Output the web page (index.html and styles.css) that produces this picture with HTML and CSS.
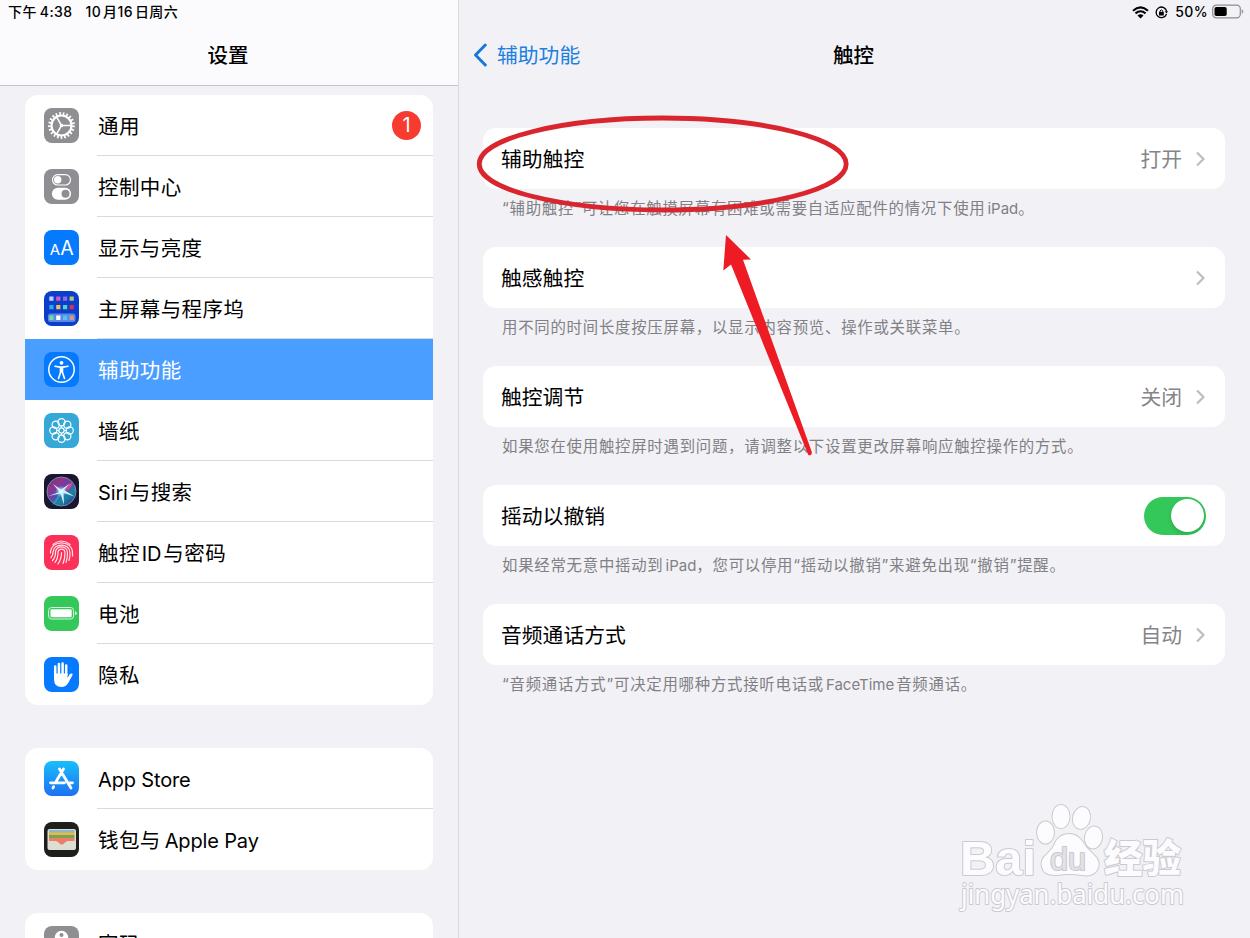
FILE: index.html
```html
<!DOCTYPE html>
<html lang="zh-CN">
<head>
    <meta charset="UTF-8">
    <meta name="viewport" content="width=device-width, initial-scale=1.0">
    <title>设置</title>
    <link rel="stylesheet" href="styles.css">
</head>
<body>
    <div class="screen">
        <aside class="sidebar">
            <header class="side-header">
                <div class="status"><span>下午<b class="time">4:38</b></span><span class="date">10<i></i>月16<i></i>日周六</span></div>
                <h1>设置</h1>
            </header>
            <nav class="menu">
                <div class="group">
                    <div class="item">
                        <svg class="icon gray" viewBox="0 0 35 35">
                            <circle cx="17.5" cy="17.5" r="12" fill="none" stroke="#fff" stroke-width="2.8" stroke-dasharray="1.7 1.89"/>
                            <circle cx="17.5" cy="17.5" r="10" fill="none" stroke="#fff" stroke-width="2.2"/>
                            <path d="M17.5 17.5H27M17.5 17.5L12.7 9.2M17.5 17.5L12.7 25.8" stroke="#fff" stroke-width="1.5"/>
                            <circle cx="17.5" cy="17.5" r="1.8" fill="#fff"/>
                        </svg>
                        <span class="label">通用</span><span class="badge">1</span>
                    </div>
                    <div class="item">
                        <svg class="icon gray" viewBox="0 0 35 35">
                            <rect x="8.5" y="5.6" width="18" height="10.4" rx="5.2" fill="none" stroke="#fff" stroke-width="1.2"/>
                            <circle cx="13.7" cy="10.8" r="3.7" fill="#fff"/>
                            <rect x="7.9" y="18.8" width="19.2" height="12" rx="6" fill="#fff"/>
                            <circle cx="21.5" cy="24.8" r="4" fill="#8e8e93"/>
                        </svg>
                        <span class="label">控制中心</span>
                    </div>
                    <div class="item">
                        <svg class="icon blue" viewBox="0 0 35 35">
                            <text class="aa" x="5.8" y="25" font-size="15">A</text>
                            <text class="aa" x="16.2" y="25" font-size="19.5">A</text>
                        </svg>
                        <span class="label">显示与亮度</span>
                    </div>
                    <div class="item">
                        <svg class="icon home" viewBox="0 0 35 35">
                            <rect x="4" y="22.5" width="27.5" height="8.5" rx="2.5" fill="#5b8ae4"/>
                            <path d="M5.3 5.6h4.2v4.2H5.3z" fill="#c9ccff"/><path d="M12.2 5.6h4.2v4.2h-4.2z" fill="#cf5ac0"/><path d="M19 5.6h4.2v4.2H19z" fill="#8f68ec"/><path d="M25.6 5.6h4.2v4.2h-4.2z" fill="#a9c878"/>
                            <path d="M5.3 14h4.2v4.2H5.3z" fill="#28a9f2"/><path d="M12.2 14h4.2v4.2h-4.2z" fill="#f4ba5c"/><path d="M19 14h4.2v4.2H19z" fill="#50d4c4"/><path d="M25.6 14h4.2v4.2h-4.2z" fill="#d6334c"/>
                            <path d="M5.3 24.6h4.2v4.4H5.3z" fill="#73dba5"/><path d="M12.2 24.6h4.2v4.4h-4.2z" fill="#fff"/><path d="M19 24.6h4.2v4.4H19z" fill="#58bef8"/><path d="M25.6 24.6h4.2v4.4h-4.2z" fill="#d29a86"/>
                        </svg>
                        <span class="label">主屏幕与程序坞</span>
                    </div>
                    <div class="item active">
                        <svg class="icon blue" viewBox="0 0 35 35">
                            <circle cx="17.5" cy="17.5" r="12.7" fill="none" stroke="#fff" stroke-width="1.5"/>
                            <circle cx="17.5" cy="10.8" r="1.9" fill="#fff"/>
                            <path d="M11 14.2l5 .9h3l5-.9M17.5 15v5M16.5 15.5v5l-2 6M18.5 15.5v5l2 6" fill="none" stroke="#fff" stroke-width="1.6" stroke-linecap="round" stroke-linejoin="round"/>
                        </svg>
                        <span class="label">辅助功能</span>
                    </div>
                    <div class="item">
                        <svg class="icon wall" viewBox="0 0 35 35">
                            <g fill="none" stroke="#fff" stroke-width="1.2">
                                <circle cx="17.5" cy="17.5" r="2.6"/>
                                <circle cx="17.5" cy="9.3" r="3.6"/><circle cx="23.3" cy="11.7" r="3.6"/><circle cx="25.7" cy="17.5" r="3.6"/><circle cx="23.3" cy="23.3" r="3.6"/>
                                <circle cx="17.5" cy="25.7" r="3.6"/><circle cx="11.7" cy="23.3" r="3.6"/><circle cx="9.3" cy="17.5" r="3.6"/><circle cx="11.7" cy="11.7" r="3.6"/>
                                <path d="M17.5 12.5v2.5M17.5 20v2.5M12.5 17.5H15M20 17.5h2.5"/>
                            </g>
                        </svg>
                        <span class="label">墙纸</span>
                    </div>
                    <div class="item">
                        <svg class="icon siri" viewBox="0 0 35 35">
                            <defs>
                                <linearGradient id="orb" x1="0" y1="0" x2=".8" y2="1"><stop offset="0" stop-color="#254b94"/><stop offset=".3" stop-color="#943288"/><stop offset=".55" stop-color="#5a4ab0"/><stop offset=".75" stop-color="#1787a0"/><stop offset="1" stop-color="#283b9c"/></linearGradient>
                                <radialGradient id="glow"><stop offset="0" stop-color="#fff"/><stop offset=".4" stop-color="#bff5ff" stop-opacity=".6"/><stop offset="1" stop-color="#8de9ff" stop-opacity="0"/></radialGradient>
                            </defs>
                            <circle cx="17.5" cy="17.5" r="14.5" fill="url(#orb)" stroke="#9a91ae" stroke-width=".8"/>
                            <path d="M4 22q8-1 13-5L8 31q4 0 10-13z" fill="#18c7bc" opacity=".55"/>
                            <path d="M17 17L28 8q2 6-9 10z" fill="#f3428a" opacity=".8"/>
                            <path d="M17 15.5l-8-5.500 6.500 8-11 4 12-2.500L20 31l-.5-12 11 3.500L20 16l6-6.500z" fill="#c9f6fc"/>
                            <circle cx="17" cy="17.5" r="6" fill="url(#glow)"/>
                        </svg>
                        <span class="label"><span class="latin">Siri</span><i></i>与搜索</span>
                    </div>
                    <div class="item">
                        <svg class="icon touch" viewBox="0 0 35 35">
                            <g fill="none" stroke="#ffe5ea" stroke-width="1.2" stroke-linecap="round">
                                <path d="M9 9.5Q17.5 2.500 26 9.5"/>
                                <path d="M6.5 18C6.5 4.5 28.5 4.5 28.5 18v3"/>
                                <path d="M7 22.5q2-2 2-5C9 7.5 26 7.5 26 18q0 5-1 7.5"/>
                                <path d="M8.5 25.5q3-3 3-8c0-7.5 12-7.5 12 .5q0 6-1.5 9.5"/>
                                <path d="M11 27.5q3-4 3-10c0-4.5 7-4.5 7 .5q0 6-2 10.5"/>
                                <path d="M14 29q3.5-5 3.5-11.5"/>
                            </g>
                        </svg>
                        <span class="label">触控<i></i><span class="latin">ID</span><i></i>与密码</span>
                    </div>
                    <div class="item">
                        <svg class="icon green" viewBox="0 0 35 35">
                            <rect x="4.6" y="11.5" width="25" height="11.5" rx="3" fill="none" stroke="#d9f5df" stroke-width="1"/>
                            <rect x="6.5" y="13.3" width="21.2" height="7.9" rx="1.3" fill="#fff"/>
                            <path d="M31 15.2q1.800.5 1.800 2t-1.800 2z" fill="#d9f5df"/>
                        </svg>
                        <span class="label">电池</span>
                    </div>
                    <div class="item">
                        <svg class="icon blue" viewBox="0 0 35 35">
                            <path d="M11.200 19V9.5M14.900 17V7M18.600 17V6.500M22.200 18V8.500" stroke="#fff" stroke-width="2.5" stroke-linecap="round"/>
                            <path d="M10 16.5h13.5v4.5l2.2-3.7q1.300-1.500 2.700-.5.500.5 0 1.500l-4 7.500Q22 30 17.500 30 10 30 10 22z" fill="#fff"/>
                        </svg>
                        <span class="label">隐私</span>
                    </div>
                </div>
                <div class="group">
                    <div class="item">
                        <svg class="icon store" viewBox="0 0 35 35">
                            <g stroke="#fff" stroke-width="2.8" stroke-linecap="round">
                                <path d="M19.5 8L11.5 21.5M15.5 8l11.5 19M6.5 21.8h14M25.5 21.8h3M9.600 25.800l-.7 1.200"/>
                            </g>
                        </svg>
                        <span class="label"><span class="latin">App Store</span></span>
                    </div>
                    <div class="item">
                        <svg class="icon wallet" viewBox="0 0 35 35">
                            <rect x="3.5" y="7" width="28.5" height="21" rx="2" fill="#deddd3"/>
                            <path d="M5 8h25.5v3H5z" fill="#8bb7c9"/>
                            <path d="M5 10.5h25.5v3H5z" fill="#e5bb45"/>
                            <path d="M5 13h25.5v3.5H5z" fill="#77a44d"/>
                            <path d="M5 16h25.5v3H24q-2 0-3.500 2-2.700 3.200-5.500 0-1.500-2-3.500-2H5z" fill="#ef7b69"/>
                        </svg>
                        <span class="label">钱包与<i></i><i></i><span class="latin">Apple Pay</span></span>
                    </div>
                </div>
                <div class="group">
                    <div class="item">
                        <svg class="icon gray" viewBox="0 0 35 35">
                            <circle cx="17.5" cy="11.5" r="6.7" fill="#fff"/>
                            <circle cx="17.5" cy="9" r="2" fill="#8e8e93"/>
                            <path d="M15 16h5v12l-2.500 3-2.500-3z" fill="#fff"/>
                        </svg>
                        <span class="label">密码</span>
                    </div>
                </div>
            </nav>
        </aside>

        <main class="detail">
            <div class="status right">
                <svg width="17" height="13" viewBox="0 0 17 13">
                    <path d="M1 4.700Q8.500-1.800 16 4.700M3.500 7.400q5-4.300 10 0" fill="none" stroke="#000" stroke-width="2.1"/>
                    <path d="M5.500 9.400q3-2.400 6 0l-3 3.100z"/>
                </svg>
                <svg class="lock" width="13" height="13" viewBox="0 0 13 13">
                    <path d="M11.500 8A5.300 5.300 0 1 1 11.700 5.500" fill="none" stroke="#000" stroke-width="1.3"/>
                    <path d="M9.800 5.200h3.200l-1.500 2.300zM4 6h4.800v3.500H4z"/>
                    <path d="M5 6V4.900q1.400-2 2.800 0V6" fill="none" stroke="#000"/>
                </svg>
                <span>50%</span>
                <svg class="battery" width="32" height="16" viewBox="0 0 32 16">
                    <rect x=".7" y="1.2" width="27.6" height="12.6" rx="3.6" fill="none" stroke="#8d8d91" stroke-width="1.2"/>
                    <rect x="2.5" y="3" width="12.2" height="9" rx="1.8"/>
                    <path d="M29.700 5.300q1.700.5 1.700 2.200t-1.700 2.200z" fill="#9d9da1"/>
                </svg>
            </div>
            <header class="detail-header">
                <a class="back"><svg width="15" height="24" viewBox="0 0 15 24"><path d="M12.300 2L2.500 12l9.800 10" fill="none" stroke="#1477dc" stroke-width="2.900" stroke-linecap="round" stroke-linejoin="round"/></svg><span>辅助功能</span></a>
                <h2>触控</h2>
            </header>
            <section class="options">
                <div class="card"><span>辅助触控</span><span class="value">打开</span><svg class="chevron" viewBox="0 0 9 16"><path d="M1 1.500L7.500 8 1 14.500"/></svg></div>
                <p>“辅助触控”可让您在触摸屏幕有困难或需要自适应配件的情况下使用<i></i><span class="latin">iPad</span>。</p>
                <div class="card"><span>触感触控</span><svg class="chevron" viewBox="0 0 9 16"><path d="M1 1.500L7.500 8 1 14.500"/></svg></div>
                <p>用不同的时间长度按压屏幕，以显示内容预览、操作或关联菜单。</p>
                <div class="card"><span>触控调节</span><span class="value">关闭</span><svg class="chevron" viewBox="0 0 9 16"><path d="M1 1.500L7.500 8 1 14.500"/></svg></div>
                <p>如果您在使用触控屏时遇到问题，请调整以下设置更改屏幕响应触控操作的方式。</p>
                <div class="card"><span>摇动以撤销</span><span class="switch"></span></div>
                <p>如果经常无意中摇动到<i></i><span class="latin">iPad</span>，您可以停用“摇动以撤销”来避免出现“撤销”提醒。</p>
                <div class="card"><span>音频通话方式</span><span class="value">自动</span><svg class="chevron" viewBox="0 0 9 16"><path d="M1 1.500L7.500 8 1 14.500"/></svg></div>
                <p>“音频通话方式”可决定用哪种方式接听电话或<i></i><span class="latin">FaceTime</span><i></i>音频通话。</p>
            </section>
        </main>

        <svg class="marks" width="1250" height="938" viewBox="0 0 1250 938">
            <ellipse cx="662.7" cy="164" rx="183.5" ry="46" fill="none" stroke="#d9262e" stroke-width="4.800"/>
            <path d="M726 235l25 24.500-8 .2L811.800 452q.2 4-3.500 3L731 264.500l-7.700 6z" fill="#ed1c24"/>
        </svg>
        <svg class="watermark" width="250" height="130" viewBox="0 0 250 130">
            <g class="wm">
                <text class="wm-logo" x="8" y="84" textLength="76" lengthAdjust="spacingAndGlyphs">Bai</text>
                <ellipse cx="93.500" cy="41.500" rx="8.500" ry="11"/>
                <ellipse cx="109" cy="25.500" rx="8.500" ry="11.500"/>
                <ellipse cx="129.500" cy="27" rx="8.500" ry="11" transform="rotate(12 129.500 27)"/>
                <ellipse cx="141.500" cy="46.500" rx="8.500" ry="11" transform="rotate(10 141.500 46.500)"/>
                <path d="M117 43q8 0 13 7 4 7 11 13 9 8 4 16-4 7-15 5-13-2-25 0-13 1-15-8-2-7 5-13 6-5 9-13 5-7 13-7z"/>
                <text class="wm-du" x="98" y="79" textLength="36" lengthAdjust="spacingAndGlyphs">du</text>
                <text class="wm-cn" x="152" y="81" textLength="77" lengthAdjust="spacingAndGlyphs">经验</text>
                <text class="wm-url" x="9" y="113" textLength="223" lengthAdjust="spacingAndGlyphs">jingyan.baidu.com</text>
            </g>
        </svg>
    </div>
</body>
</html>
```
FILE: styles.css
```css
body {
    margin: 0;
    font-family: Inter, "Noto Sans CJK SC", sans-serif;
    background-color: #f2f1f6;
    color: #000;
}
.screen {
    position: relative;
    display: flex;
    width: 1250px;
    height: 938px;
    overflow: hidden;
}
.sidebar {
    box-sizing: border-box;
    width: 459px;
    height: 938px;
    border-right: 1px solid #d9d9dd;
    overflow: hidden;
}
.side-header {
    box-sizing: border-box;
    height: 86px;
    background-color: #fbfbfd;
    border-bottom: 1px solid #c7c7cb;
}
.status {
    display: flex;
    height: 24px;
    padding-left: 8px;
    align-items: center;
    font-size: 14px;
    font-weight: 500;
    line-height: 20px;
    letter-spacing: 0.4px;
}
.status span {
    margin-top: -1px;
}
.time {
    margin-left: 3px;
    font-weight: 500;
}
.status .date {
    margin-left: 13px;
}
i {
    display: inline-block;
    width: 2px;
}
h1, h2 {
    margin: 0;
    font-size: 20.5px;
    font-weight: 500;
    line-height: 30px;
    text-align: center;
}
h1 {
    padding: 17px 2px 0 0;
}
h2 {
    padding: 2px 2px 0 0;
}
.menu {
    display: flex;
    flex-direction: column;
    gap: 43px;
    padding: 9px 25px 0;
}
.group {
    flex: none;
    background-color: white;
    border-radius: 13px;
}
.item {
    position: relative;
    display: flex;
    align-items: center;
    height: 61px;
    padding-left: 19px;
}
.icon {
    flex: none;
    width: 35px;
    height: 35px;
    border-radius: 8px;
}
.gray {
    background-color: #8e8e93;
}
.blue {
    background-color: #067aff;
}
.home {
    background-color: #0b3fcb;
}
.wall {
    background-color: #35a8d8;
}
.siri {
    background-color: #17172f;
}
.touch {
    background-color: #fc3159;
}
.green {
    background-color: #34c759;
}
.store {
    background: linear-gradient(#18bffb, #1d70f2);
}
.wallet {
    background-color: #1e1e1d;
}
.aa {
    fill: white;
    font-family: Inter, sans-serif;
}
.label {
    box-sizing: border-box;
    flex: 1;
    height: 61px;
    margin-left: 18px;
    padding-left: 1px;
    border-bottom: 1px solid #dadadd;
    font-size: 20.5px;
    letter-spacing: 0.4px;
    line-height: 64px;
}
.label .latin {
    font-size: 20px;
    letter-spacing: -0.15px;
}
.item:last-child .label {
    border-bottom: none;
}
.active {
    background-color: #4a9eff;
    color: white;
}
.active .label {
    border-color: transparent;
}
.badge {
    position: absolute;
    top: 16px;
    right: 12px;
    width: 29px;
    height: 29px;
    border-radius: 50%;
    background-color: #f83b30;
    color: white;
    font-size: 20px;
    line-height: 29px;
    text-align: center;
}
.detail {
    width: 791px;
}
.right {
    justify-content: flex-end;
    padding: 0 6px 0 0;
}
.lock {
    margin: 0 7px 0 6px;
}
.battery {
    margin-left: 4px;
}
.detail-header {
    display: grid;
    grid-template-columns: 1fr auto 1fr;
    align-items: center;
    height: 62px;
}
.back {
    display: flex;
    align-items: center;
    gap: 9px;
    padding-left: 14px;
    color: #1b80df;
    font-size: 20.8px;
}
.back span {
    margin-top: -2px;
}
.options {
    padding: 42px 25px 0 24px;
}
.card {
    display: flex;
    align-items: center;
    box-sizing: border-box;
    height: 61px;
    padding: 0 20px 0 18px;
    background-color: white;
    border-radius: 13px;
    font-size: 20.8px;
}
.card span {
    margin-top: -1px;
}
.card .value {
    margin-left: auto;
    color: #858589;
}
.chevron {
    width: 9px;
    height: 16px;
    margin-left: 14px;
    fill: none;
    stroke: #bdbdc1;
    stroke-width: 2.2px;
}
.card span:first-child + .chevron {
    margin-left: auto;
}
.card .switch {
    box-sizing: border-box;
    width: 62px;
    height: 38px;
    margin: 0 -1px 0 auto;
    border-radius: 19px;
    background-color: #34c759;
}
.switch::after {
    content: "";
    display: block;
    width: 33px;
    height: 33px;
    margin: 2.5px 0 0 27px;
    border-radius: 50%;
    background-color: white;
    box-shadow: 0 2px 4px rgba(0, 0, 0, 0.15);
}
.switch {
    display: flex;
}
p {
    box-sizing: border-box;
    height: 58px;
    margin: 0;
    padding-left: 19px;
    color: #808085;
    font-size: 15.4px;
    line-height: 40px;
    letter-spacing: 0.76px;
    white-space: nowrap;
}
p .latin {
    font-size: 15px;
    letter-spacing: 0;
}
.marks {
    position: absolute;
    top: 0;
    left: 0;
}
.watermark {
    position: absolute;
    top: 791px;
    left: 952px;
}
.wm {
    fill: #fcfcfe;
    stroke: #cacacf;
    stroke-width: 2px;
    stroke-linejoin: round;
    paint-order: stroke;
    font-family: "Liberation Sans", "Noto Sans CJK SC", sans-serif;
}
.wm-logo {
    font-size: 49px;
    font-weight: 700;
}
.wm-du {
    font-size: 31px;
    fill: #e2e2e7;
    stroke: #c8c8cd;
}
.wm-cn {
    font-size: 39px;
    font-weight: 900;
}
.wm-url {
    font-size: 27px;
    font-family: "Noto Sans", sans-serif;
}
```
